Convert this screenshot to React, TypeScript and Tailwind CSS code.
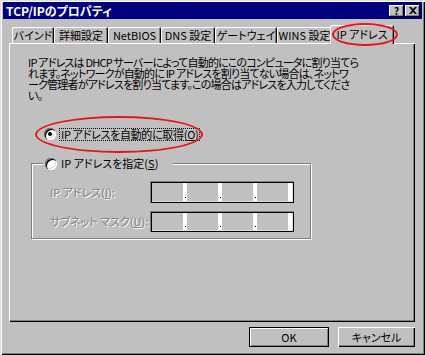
import React from "react";

const tabs = [
  { label: "バインド", w: 42 },
  { label: "詳細設定", w: 54 },
  { label: "NetBIOS", w: 53 },
  { label: "DNS 設定", w: 54 },
  { label: "ゲートウェイ", w: 62 },
  { label: "WINS 設定", w: 55 },
];

function Radio({ checked }: { checked?: boolean }) {
  return (
    <span className="relative flex h-[12px] w-[12px] shrink-0 items-center justify-center rounded-full bg-white shadow-[inset_1px_1px_0_#808080,inset_2px_2px_0_#000,inset_-1px_-1px_0_#fff,inset_-2px_-2px_0_#dfdfdf]">
      {checked ? <span className="h-[4px] w-[4px] rounded-full bg-black" /> : null}
    </span>
  );
}

function IpBox() {
  return (
    <div className="flex h-full w-[144px] bg-[#c0c0c0] p-[2px] shadow-[inset_1px_1px_0_#808080,inset_2px_2px_0_#000,inset_-1px_-1px_0_#000,inset_-2px_-2px_0_#dfdfdf]">
      {[0, 1, 2, 3].map((i) => (
        <React.Fragment key={i}>
          <div className="flex-1" />
          <div className="flex w-[4px] items-end justify-center bg-white pb-[3px]">
            {i < 3 ? <span className="h-[1px] w-[1px] bg-black" /> : null}
          </div>
        </React.Fragment>
      ))}
    </div>
  );
}

export default function App() {
  const dis = "text-[#808080] [text-shadow:1px_1px_0_#fff]";
  return (
    <div className="h-[355px] w-[425px] overflow-hidden bg-[#c0c0c0] px-[3px] pt-[2px] font-['Noto_Sans_CJK_JP',sans-serif] text-black [font-feature-settings:'palt'] shadow-[inset_1px_1px_0_#dfdfdf,inset_2px_2px_0_#fff,inset_-1px_-1px_0_#000,inset_-2px_-2px_0_#808080]">
      {/* title bar */}
      <div className="flex h-[17px] items-center justify-between bg-[#000080] pl-[3px] pr-[2px]">
        <span className="text-[12px] font-bold leading-none text-white">TCP/IPのプロパティ</span>
        <div className="flex gap-[1px]">
          <span className="flex h-[12px] w-[15px] items-center justify-center bg-[#c0c0c0] text-[10px] font-bold leading-none shadow-[inset_-1px_-1px_0_#000,inset_1px_1px_0_#fff,inset_-2px_-2px_0_#808080]">?</span>
          <span className="flex h-[12px] w-[15px] items-center justify-center bg-[#c0c0c0] shadow-[inset_-1px_-1px_0_#000,inset_1px_1px_0_#fff,inset_-2px_-2px_0_#808080]">
            <svg width="8" height="7" viewBox="0 0 8 7">
              <path d="M0 0h2l2 2 2-2h2L5 3.5 8 7H6L4 5 2 7H0l3-3.5z" fill="#000" />
            </svg>
          </span>
        </div>
      </div>

      {/* tabs */}
      <div className="relative z-10 mt-[6px] ml-[9px] flex h-[18px] items-end">
        {tabs.map((t) => (
          <div
            key={t.label}
            className="flex h-[16px] items-center justify-center whitespace-nowrap rounded-t-[2px] bg-[#c0c0c0] pt-[1px] text-[11px] leading-none shadow-[inset_1px_1px_0_#fff,inset_-1px_0_0_#000,inset_-2px_0_0_#808080]"
            style={{ width: t.w }}
          >
            {t.label}
          </div>
        ))}
        <div className="relative -mx-[2px] -mb-[1px] flex h-[19px] w-[64px] items-center justify-center whitespace-nowrap rounded-t-[2px] bg-[#c0c0c0] pb-[1px] text-[11px] leading-none shadow-[inset_1px_1px_0_#fff,inset_-1px_0_0_#000,inset_-2px_0_0_#808080]">
          IP アドレス
          <span className="absolute left-[2px] -top-[2px] h-[23px] w-[66px] rounded-[50%] border-2 border-[#e8131b]" />
        </div>
      </div>

      {/* panel */}
      <div className="ml-[6px] h-[279px] w-[406px] pl-[19px] pt-[14px] shadow-[inset_1px_1px_0_#fff,inset_-1px_-1px_0_#000,inset_-2px_-2px_0_#808080]">
        <p className="whitespace-nowrap text-[11px] leading-[11px] tracking-[-0.8px]">
          IP アドレスは DHCP サーバーによって自動的にこのコンピュータに割り当てら
          <br />
          れます。ネットワークが自動的に IP アドレスを割り当てない場合は、ネットワ
          <br />
          ーク管理者がアドレスを割り当てます。この場合はアドレスを入力してくださ
          <br />
          い。
        </p>

        <div className="relative ml-[16px] mt-[26px] flex h-[14px] items-center gap-[3px]">
          <Radio checked />
          <span className="whitespace-nowrap border border-dotted border-black px-[1px] text-[11px] leading-[11px] tracking-[-0.3px]">
            IP アドレスを自動的に取得(<span className="underline">O</span>)
          </span>
          <span className="absolute -left-[9px] -top-[11px] h-[37px] w-[168px] rounded-[50%] border-2 border-[#e8131b]" />
        </div>

        <div className="relative ml-[3px] mt-[22px] h-[76px] w-[280px] border border-[#808080] pl-[18px] pt-[17px] shadow-[1px_1px_0_#fff,inset_1px_1px_0_#fff]">
          <div className="absolute -top-[7px] left-[11px] flex h-[13px] w-[130px] items-center gap-[4px] bg-[#c0c0c0] pl-[2px]">
            <Radio />
            <span className="whitespace-nowrap text-[11px] leading-[11px]">
              IP アドレスを指定(<span className="underline">S</span>)
            </span>
          </div>
          <div className="flex h-[22px] items-center">
            <span className={`w-[100px] whitespace-nowrap text-[11px] leading-[11px] ${dis}`}>
              IP アドレス(<span className="underline">I</span>):
            </span>
            <IpBox />
          </div>
          <div className="mt-[8px] flex h-[21px] items-center">
            <span className={`w-[100px] whitespace-nowrap text-[11px] leading-[11px] ${dis}`}>
              サブネット マスク(<span className="underline">U</span>):
            </span>
            <IpBox />
          </div>
        </div>
      </div>

      {/* buttons */}
      <div className="ml-[246px] mt-[5px] flex gap-[9px]">
        <button className="flex h-[20px] w-[80px] items-center justify-center bg-[#c0c0c0] text-[11px] leading-none shadow-[inset_0_0_0_1px_#000,inset_2px_2px_0_#fff,inset_-2px_-2px_0_#808080]">
          OK
        </button>
        <button className="flex h-[20px] w-[77px] items-center justify-center bg-[#c0c0c0] text-[11px] leading-none shadow-[inset_1px_1px_0_#fff,inset_-1px_-1px_0_#000,inset_-2px_-2px_0_#808080]">
          キャンセル
        </button>
      </div>
    </div>
  );
}
